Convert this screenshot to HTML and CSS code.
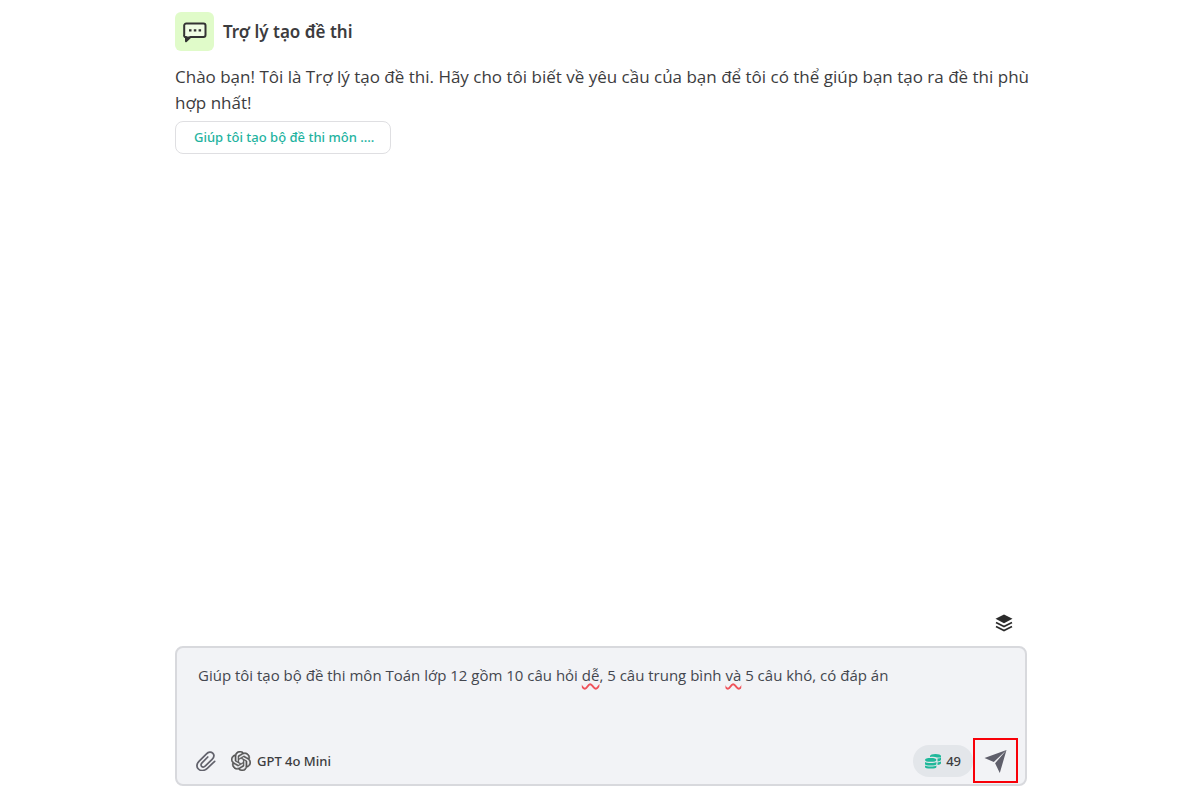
FILE: index.html
```html
<!DOCTYPE html>
<html lang="vi">
<head>
  <meta charset="UTF-8">
  <meta name="viewport" content="width=device-width, initial-scale=1.0">
  <title>Trợ lý tạo đề thi</title>
  <link rel="stylesheet" href="styles.css">
</head>
<body>
  <main class="chat">
    <header class="chat-header">
      <div class="bot-icon">
        <svg width="24" height="24" viewBox="0 0 24 24" aria-hidden="true">
          <path d="M3.200 3.500h17.300a2 2 0 0 1 2 2v9.500a2 2 0 0 1-2 2H7.500l-4.500 4.200V17a1.500 1.500 0 0 1-1.800-2V5.500a2 2 0 0 1 2-2z" fill="#fff" fill-opacity="0.500" stroke="#333" stroke-width="2" stroke-linejoin="round"/>
          <path d="M3 16.500h4.800L3 21.500z" fill="#333"/>
          <path d="M6 9.300h2.500v2.200H6zM10.800 9.300h2.500v2.200h-2.500zM15.600 9.300h2.500v2.200h-2.500z" fill="#333"/>
        </svg>
      </div>
      <h1>Trợ lý tạo đề thi</h1>
    </header>

    <section class="messages">
      <p>Chào bạn! Tôi là Trợ lý tạo đề thi. Hãy cho tôi biết về yêu cầu của bạn để tôi có thể giúp bạn tạo ra đề thi phù hợp nhất!</p>
      <button class="suggestion" type="button">Giúp tôi tạo bộ đề thi môn ....</button>
    </section>

    <div class="tools">
      <button class="icon-btn" type="button" aria-label="Lớp">
        <svg width="18" height="18" viewBox="0 0 18 18" aria-hidden="true">
          <path d="M9 0.500L17.500 4.800 9 9.200 0.500 4.800z" fill="#2b2b2b"/>
          <path d="M1 8.600l8 4 8-4M1 12.600l8 4 8-4" fill="none" stroke="#2b2b2b" stroke-width="1.700"/>
        </svg>
      </button>
    </div>

    <form class="composer">
      <div class="editor">
        <div class="spelling" aria-hidden="true">Giúp tôi tạo bộ đề thi môn Toán lớp 12 gồm 10 câu hỏi <span>dễ</span>, 5 câu trung bình <span>và</span> 5 câu khó, có đáp án</div>
        <textarea aria-label="Tin nhắn" spellcheck="false">Giúp tôi tạo bộ đề thi môn Toán lớp 12 gồm 10 câu hỏi dễ, 5 câu trung bình và 5 câu khó, có đáp án</textarea>
      </div>
      <div class="composer-bar">
        <button class="icon-btn" type="button" aria-label="Đính kèm">
          <svg width="20" height="20" viewBox="0 0 20 20" fill="none" stroke="#62626c" stroke-width="1.700" stroke-linecap="round" stroke-linejoin="round" aria-hidden="true">
            <path d="M18.700 10.300l-7.400 7c-3 2.800-7 2.800-8.900.7-2.100-2.300-1.600-5.400.8-7.900l7.300-7.300c1.900-1.900 4.600-2.200 6.200-.6 1.700 1.700 1.300 4.200-.6 6.100l-6.700 6.600c-1.200 1.200-2.900 1.300-3.800.4s-.7-2.400.4-3.500l5.800-5.800"/>
          </svg>
        </button>
        <button class="model" type="button">
          <svg width="20" height="20" viewBox="0 0 24 24" fill="#555" stroke="#555" stroke-width="0.500" aria-hidden="true">
            <path d="M22.2819 9.8211a5.9847 5.9847 0 0 0-.5157-4.9108 6.0462 6.0462 0 0 0-6.5098-2.9A6.0651 6.0651 0 0 0 4.9807 4.1818a5.9847 5.9847 0 0 0-3.9977 2.9 6.0462 6.0462 0 0 0 .7427 7.0966 5.98 5.98 0 0 0 .511 4.9107 6.051 6.051 0 0 0 6.5146 2.9001A5.9847 5.9847 0 0 0 13.2599 24a6.0557 6.0557 0 0 0 5.7718-4.2058 5.9894 5.9894 0 0 0 3.9977-2.9001 6.0557 6.0557 0 0 0-.7475-7.0729zm-9.022 12.6081a4.4755 4.4755 0 0 1-2.8764-1.0408l.1419-.0804 4.7783-2.7582a.7948.7948 0 0 0 .3927-.6813v-6.7369l2.02 1.1686a.071.071 0 0 1 .038.052v5.5826a4.504 4.504 0 0 1-4.4945 4.4944zm-9.6607-4.1254a4.4708 4.4708 0 0 1-.5346-3.0137l.142.0852 4.783 2.7582a.7712.7712 0 0 0 .7806 0l5.8428-3.3685v2.3324a.0804.0804 0 0 1-.0332.0615L9.74 19.9502a4.4992 4.4992 0 0 1-6.1408-1.6464zM2.3408 7.8956a4.485 4.485 0 0 1 2.3655-1.9728V11.6a.7664.7664 0 0 0 .3879.6765l5.8144 3.3543-2.0201 1.1685a.0757.0757 0 0 1-.071 0l-4.8303-2.7865A4.504 4.504 0 0 1 2.3408 7.872zm16.5963 3.8558L13.1038 8.364 15.1192 7.2a.0757.0757 0 0 1 .071 0l4.8303 2.7913a4.4944 4.4944 0 0 1-.6765 8.1042v-5.6772a.79.79 0 0 0-.407-.667zm2.0107-3.0231l-.142-.0852-4.7735-2.7818a.7759.7759 0 0 0-.7854 0L9.409 9.2297V6.8974a.0662.0662 0 0 1 .0284-.0615l4.8303-2.7866a4.4992 4.4992 0 0 1 6.6802 4.66zM8.3065 12.863l-2.02-1.1638a.0804.0804 0 0 1-.038-.0567V6.0742a4.4992 4.4992 0 0 1 7.3757-3.4537l-.142.0805L8.704 5.459a.7948.7948 0 0 0-.3927.6813zm1.0976-2.3654l2.602-1.4998 2.6069 1.4998v2.9994l-2.5974 1.4997-2.6067-1.4997Z"/>
          </svg>
          GPT 4o Mini
        </button>
        <div class="credits">
          <svg width="16" height="16" viewBox="0 0 16 16" fill="#1fb89a" aria-hidden="true">
            <path d="M5 3C5 1.700 7.500 1 10.500 1s5.500.7 5.500 2v1.500H12C10 3.600 7.500 3.500 5 4z"/>
            <path d="M12.500 5.600c1.500 0 2.700-.3 3.500-.8v2c0 .9-1.200 1.500-3.500 1.600zM12.500 9.400c1.500 0 2.700-.3 3.500-.8v1.700c0 .9-1.200 1.500-3.500 1.600z"/>
            <path d="M0 6.900c0-1.300 2-1.900 5.700-1.900s5.700.6 5.700 1.900-2 1.900-5.700 1.900S0 8.200 0 6.900z"/>
            <path d="M0 8.900c1 .8 3.200 1.100 5.700 1.100s4.700-.3 5.700-1.100v2c0 1-2 1.700-5.700 1.700S0 11.900 0 10.900zM0 12.400c1 .8 3.200 1.100 5.700 1.100s4.700-.3 5.700-1.100v1.500c0 1.100-2 1.700-5.700 1.700S0 15 0 13.900z"/>
          </svg>
          49
        </div>
        <button class="send" type="submit" aria-label="Gửi">
          <svg width="24" height="24" viewBox="0 0 24 24" fill="#5f5f6b" aria-hidden="true">
            <path d="M22.500 1L.5 8.900l9.300 4zM22.500 1L11.100 14.200 15.800 24z"/>
          </svg>
        </button>
      </div>
    </form>
  </main>
</body>
</html>
```
FILE: styles.css
```css
* {
  box-sizing: border-box;
}

body {
  margin: 0;
  background: #fff;
  color: #3c3c3e;
  font-family: 'Noto Sans', sans-serif;
}

button {
  padding: 0;
  border: none;
  background: none;
  font-family: inherit;
  cursor: pointer;
}

svg {
  display: block;
  flex-shrink: 0;
}

.chat {
  display: flex;
  flex-direction: column;
  max-width: 854px;
  min-height: 100vh;
  margin: 0 auto;
  padding: 12px 0 14px 2px;
}

.chat-header {
  display: flex;
  align-items: center;
  gap: 9px;
}

.chat-header h1 {
  margin: 0;
  font-size: 17px;
  font-weight: 600;
}

.bot-icon {
  display: flex;
  align-items: center;
  justify-content: center;
  width: 39px;
  height: 39px;
  border-radius: 6px;
  background: #e0fbc9;
}

.messages {
  flex: 1;
}

.messages p {
  margin: 13px -12px 5px 0;
  font-family: 'Open Sans', sans-serif;
  font-size: 17px;
  line-height: 26px;
}

.suggestion {
  height: 33px;
  padding: 0 16px 2px 18px;
  border: 1px solid #dfdfe2;
  border-radius: 8px;
  color: #1fb3a0;
  font-size: 13px;
  font-weight: 500;
}

.tools {
  display: flex;
  justify-content: flex-end;
  padding: 0 14px 14px;
}

.composer {
  display: flex;
  flex-direction: column;
  border: 2px solid #d8d9dd;
  border-radius: 8px;
  background: #f2f3f6;
}

/* the textarea lies on the spelling layer, both wrap the same way */
.editor {
  display: grid;
  padding: 14px 21px 0;
}

.editor textarea,
.spelling {
  grid-area: 1 / 1;
  min-height: 75px;
  margin: 0;
  padding: 0;
  border: none;
  font-family: 'Open Sans', sans-serif;
  font-size: 15px;
  line-height: 26px;
}

.editor textarea {
  background: none;
  color: #44474f;
  resize: none;
  outline: none;
}

.spelling {
  color: transparent;
}

.spelling span {
  text-decoration: underline wavy #f0525a 2px;
  text-underline-offset: 2px;
}

.composer-bar {
  display: flex;
  align-items: center;
  padding: 1px 7px 1px 19px;
}

.model {
  display: flex;
  align-items: center;
  gap: 6px;
  margin-left: 15px;
  color: #3c3c3e;
  font-size: 13px;
  font-weight: 500;
}

.credits {
  display: flex;
  align-items: center;
  gap: 5px;
  height: 32px;
  margin-left: auto;
  padding: 0 12px;
  border-radius: 16px;
  background: #e3e6ea;
  font-size: 13px;
  font-weight: 500;
}

.send {
  display: flex;
  align-items: center;
  justify-content: center;
  width: 45px;
  height: 45px;
  border: 2px solid #f80008;
}
```
